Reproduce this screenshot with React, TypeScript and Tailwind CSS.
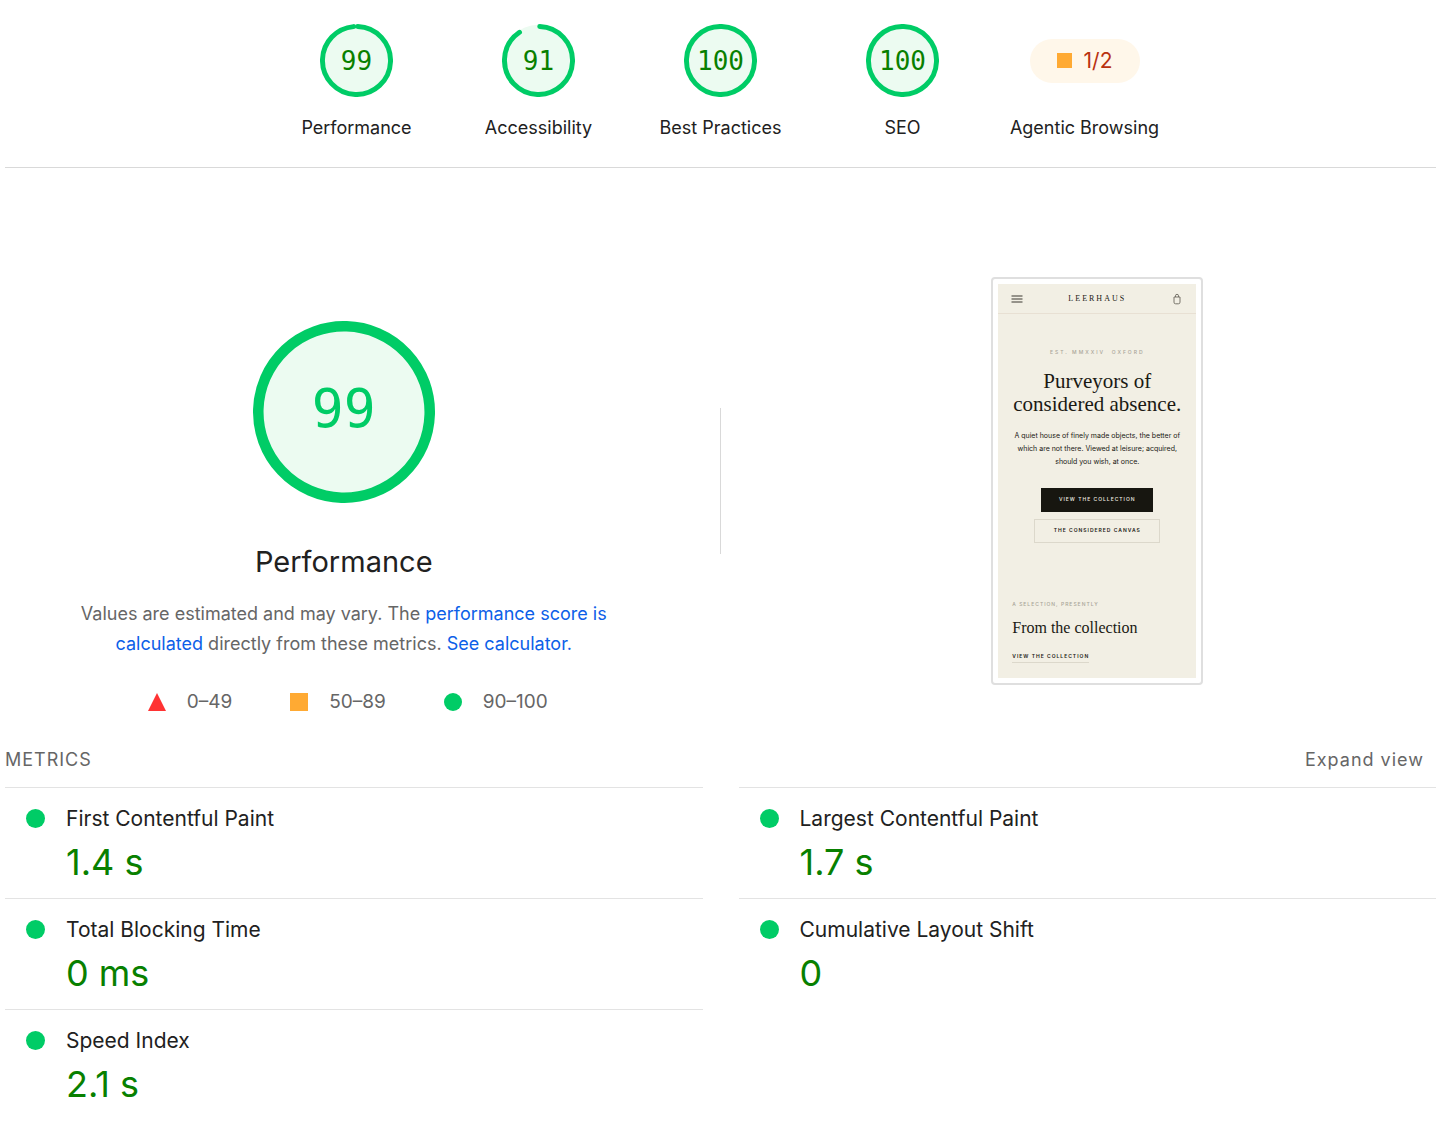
const SCORES = [
  { label: "Performance", score: 99 },
  { label: "Accessibility", score: 91 },
  { label: "Best Practices", score: 100 },
  { label: "SEO", score: 100 },
];

const METRICS = [
  { label: "First Contentful Paint", value: "1.4 s" },
  { label: "Largest Contentful Paint", value: "1.7 s" },
  { label: "Total Blocking Time", value: "0 ms" },
  { label: "Cumulative Layout Shift", value: "0" },
  { label: "Speed Index", value: "2.1 s" },
];

function Ring({ score, stroke, className }: { score: number; stroke: number; className: string }) {
  const radius = 50 - stroke / 2;
  const length = 2 * Math.PI * radius;
  // the round caps eat half a stroke on each end of the arc
  const dash = score === 100 ? undefined : `${(length * score) / 100 - stroke / 2} ${length}`;
  const rotation = -90 + (stroke / 4 / radius) * (180 / Math.PI);

  return (
    <svg viewBox="0 0 100 100" className={className} aria-hidden="true">
      <circle cx="50" cy="50" r="49" fill="#ecfbf1" />
      <circle
        cx="50"
        cy="50"
        r={radius}
        fill="none"
        stroke="#00cc66"
        strokeWidth={stroke}
        strokeLinecap="round"
        strokeDasharray={dash}
        transform={`rotate(${rotation} 50 50)`}
      />
    </svg>
  );
}

function ScoreGauge({ label, score }: { label: string; score: number }) {
  return (
    <a href="#performance" className="flex w-[182px] flex-col items-center">
      <span className="grid place-items-center">
        <Ring score={score} stroke={6.8} className="col-start-1 row-start-1 size-[73px]" />
        <span className="col-start-1 row-start-1 font-['DejaVu_Sans_Mono',monospace] text-[26px] leading-none text-[#088000]">
          {score}
        </span>
      </span>
      <span className="mt-[18px] text-[18px] leading-[26px]">{label}</span>
    </a>
  );
}

function Metric({ label, value }: { label: string; value: string }) {
  return (
    <div className="flex h-[111px] gap-[21px] border-t border-[#e3e3e3] pt-4 pl-[21px]">
      <span className="mt-[5px] size-[19px] shrink-0 rounded-full bg-[#00cc66]" />
      <div>
        <h3 className="text-[21px] leading-[30px]">{label}</h3>
        <p className="mt-1.5 text-[36px] leading-[44px] text-[#088000]">{value}</p>
      </div>
    </div>
  );
}

function StorePreview() {
  return (
    <div className="w-[212px] rounded border-2 border-[#dfdfdf] bg-white p-[5px]">
      <div className="flex h-[394px] flex-col bg-[#f2efe4] text-[#1a1913]">
        <div className="flex h-[30px] shrink-0 items-center justify-between border-b border-[#e8e0d3] px-[13px]">
          <button type="button" aria-label="Menu">
            <svg viewBox="0 0 12 12" className="size-3" stroke="#3a3831" strokeWidth="1.2">
              <path d="M0.5 3h11M0.5 6h11M0.5 9h11" />
            </svg>
          </button>
          <span className="font-['Liberation_Serif',serif] text-[8px] tracking-[2px]">LEERHAUS</span>
          <button type="button" aria-label="Bag">
            <svg viewBox="0 0 12 12" className="size-3" fill="none" stroke="#6b685e" strokeWidth="0.9">
              <path d="M3 4h6v5.2a1.6 1.6 0 0 1-1.6 1.6H4.6A1.6 1.6 0 0 1 3 9.2z" />
              <path d="M4.5 4V2.8a1.5 1.5 0 0 1 3 0V4" />
            </svg>
          </button>
        </div>
        <div className="flex flex-col items-center text-center">
          <p className="mt-[33px] text-[5px] leading-[10px] font-medium tracking-[2px] whitespace-pre text-[#a8a498]">
            {"EST. MMXXIV  OXFORD"}
          </p>
          <h2 className="mt-[13px] font-['Liberation_Serif',serif] text-[21px] leading-[23px] whitespace-nowrap">
            Purveyors of
            <br />
            considered absence.
          </h2>
          <p className="mt-[13px] text-[7px] leading-[13px] whitespace-nowrap">
            A quiet house of finely made objects, the better of
            <br />
            which are not there. Viewed at leisure; acquired,
            <br />
            should you wish, at once.
          </p>
          <a
            href="#collection"
            className="mt-5 flex h-6 w-28 items-center justify-center bg-[#171610] text-[5px] font-medium tracking-[1px] whitespace-nowrap text-[#f2efe4]"
          >
            VIEW THE COLLECTION
          </a>
          <a
            href="#canvas"
            className="mt-[7px] flex h-6 w-[126px] items-center justify-center border border-[#dcd8cb] text-[5px] font-semibold tracking-[1px] whitespace-nowrap"
          >
            THE CONSIDERED CANVAS
          </a>
        </div>
        <div className="mt-14 flex flex-col items-start pl-3.5">
          <p className="text-[5px] leading-[10px] font-medium tracking-[1px] text-[#a8a498]">
            A SELECTION, PRESENTLY
          </p>
          <h2 className="mt-2 font-['Liberation_Serif',serif] text-[16px] leading-[22px]">
            From the collection
          </h2>
          <a
            href="#collection"
            className="mt-[11px] border-b border-[#dcd8cb] text-[5px] leading-[12px] font-semibold tracking-[1px]"
          >
            VIEW THE COLLECTION
          </a>
        </div>
      </div>
    </div>
  );
}

export default function App() {
  return (
    <main className="min-h-screen bg-white pr-1 pl-[5px] font-[Inter,sans-serif] text-[#212121]">
      <header className="flex h-[168px] justify-center border-b border-[#d9d9d9] pt-6">
        {SCORES.map((item) => (
          <ScoreGauge key={item.label} {...item} />
        ))}
        <a href="#agentic" className="flex w-[182px] flex-col items-center">
          <span className="flex h-[73px] items-center">
            <span className="flex h-11 w-[110px] items-center justify-center gap-3 rounded-full bg-[#fff7ea] text-[21px] text-[#b93211]">
              <span className="size-[15px] bg-[#ffaa33]" />
              1/2
            </span>
          </span>
          <span className="mt-[18px] text-[18px] leading-[26px] whitespace-nowrap">Agentic Browsing</span>
        </a>
      </header>

      <section
        id="performance"
        className="grid grid-cols-[minmax(0,1fr)_76px_minmax(0,1fr)] items-start pt-[109px]"
      >
        <div className="flex flex-col items-center pt-[44px]">
          <div className="grid place-items-center">
            <Ring score={100} stroke={5.8} className="col-start-1 row-start-1 size-[182px]" />
            <span className="col-start-1 row-start-1 pb-2 font-['DejaVu_Sans_Mono',monospace] text-[53px] leading-none text-[#00cc66]">
              99
            </span>
          </div>
          <h1 className="mt-[38px] text-[29px] leading-[42px]">Performance</h1>
          <p className="mt-4 max-w-[560px] text-center text-[18px] leading-[30px] text-[#666]">
            Values are estimated and may vary. The{" "}
            <a href="#scoring" className="text-[#0c60e8]">
              performance score is
              <br />
              calculated
            </a>{" "}
            directly from these metrics.{" "}
            <a href="#calculator" className="text-[#0c60e8]">
              See calculator.
            </a>
          </p>
          <ul className="mt-7 flex gap-[58px] pl-2 text-[19px] leading-[30px] text-[#666]">
            <li className="flex items-center gap-[21px]">
              <svg viewBox="0 0 18 18" className="size-[18px]" aria-hidden="true">
                <path d="M9 0l9 18H0z" fill="#ff3333" />
              </svg>
              0–49
            </li>
            <li className="flex items-center gap-[21px]">
              <span className="size-[18px] bg-[#ffaa33]" />
              50–89
            </li>
            <li className="flex items-center gap-[21px]">
              <span className="size-[18px] rounded-full bg-[#00cc66]" />
              90–100
            </li>
          </ul>
        </div>
        <div className="mx-auto mt-[131px] h-[146px] w-px bg-[#d9d9d9]" />
        <div className="flex justify-center">
          <StorePreview />
        </div>
      </section>

      <section className="mt-7">
        <div className="flex items-center justify-between pr-3 pb-3 text-[18px] leading-[30px] text-[#666]">
          <h2 className="tracking-[1px]">METRICS</h2>
          <button type="button" className="tracking-[1px]">
            Expand view
          </button>
        </div>
        <div className="grid grid-cols-2 gap-x-9">
          {METRICS.map((metric) => (
            <Metric key={metric.label} {...metric} />
          ))}
        </div>
      </section>
    </main>
  );
}
